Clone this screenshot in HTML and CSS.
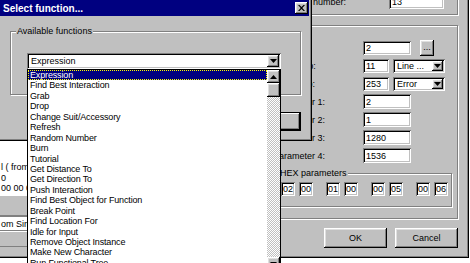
FILE: index.html
```html
<!DOCTYPE html>
<html>
	<head>
		<meta charset="UTF-8">
		<title>Select function...</title>
		<link rel="stylesheet" href="styles.css">
	</head>
	<body>
		<div class="desk">
			<div class="win back">
				<div class="left-col">
					<div class="memo">
						<div>l ( from Sims )</div>
						<div>0</div>
						<div>00 00 00 00</div>
					</div>
					<div class="bar"></div>
					<div class="tab">om Sim</div>
					<div class="bar"></div>
					<div class="bar light"></div>
				</div>
				<div class="grp grp-line">
					<span class="lbl">Line number:</span>
					<span class="field w55">13</span>
				</div>
				<div class="grp grp-main">
					<div class="row">
						<span class="lbl">Function:</span>
						<span class="field w48">2</span>
						<span class="btn dots">...</span>
					</div>
					<div class="row">
						<span class="lbl">True jump:</span>
						<span class="field w26">11</span>
						<span class="combo sm w52"><span class="txt">Line ...</span><span class="arr"><svg width="7" height="4" viewBox="0 0 7 4"><path d="M0 0h7L3.5 4z"/></svg></span></span>
					</div>
					<div class="row">
						<span class="lbl">Else jump:</span>
						<span class="field w26">253</span>
						<span class="combo sm w52"><span class="txt">Error</span><span class="arr"><svg width="7" height="4" viewBox="0 0 7 4"><path d="M0 0h7L3.5 4z"/></svg></span></span>
					</div>
					<div class="row">
						<span class="lbl">Parameter 1:</span>
						<span class="field w48 tall">2</span>
					</div>
					<div class="row">
						<span class="lbl">Parameter 2:</span>
						<span class="field w48 tall">1</span>
					</div>
					<div class="row">
						<span class="lbl">Parameter 3:</span>
						<span class="field w48 tall">1280</span>
					</div>
					<div class="row">
						<span class="lbl">Parameter 4:</span>
						<span class="field w48 tall">1536</span>
					</div>
					<div class="grp grp-hex">
						<span class="legend">HEX parameters</span>
						<div class="pair"><span class="hex">02</span><span class="hex">00</span></div>
						<div class="pair"><span class="hex">01</span><span class="hex">00</span></div>
						<div class="pair"><span class="hex">00</span><span class="hex">05</span></div>
						<div class="pair"><span class="hex">00</span><span class="hex">06</span></div>
					</div>
				</div>
				<div class="btn-row">
					<span class="btn push">OK</span>
					<span class="btn push">Cancel</span>
				</div>
			</div>

			<div class="win front">
				<div class="title">
					<span>Select function...</span>
					<span class="btn close"><svg width="7" height="6" viewBox="0 0 7 6"><path d="M0 0h1.5L3.5 2 5.5 0H7L4.3 3 7 6H5.5L3.5 4 1.5 6H0L2.7 3z"/></svg></span>
				</div>
				<div class="grp grp-avail">
					<span class="legend">Available functions</span>
					<div class="combo big">
						<span class="txt">Expression</span>
						<span class="arr"><svg width="7" height="4" viewBox="0 0 7 4"><path d="M0 0h7L3.5 4z"/></svg></span>
					</div>
				</div>
				<span class="btn push def"></span>
			</div>

			<div class="droplist">
				<div class="items">
					<div class="item sel">Expression</div>
					<div class="item">Find Best Interaction</div>
					<div class="item">Grab</div>
					<div class="item">Drop</div>
					<div class="item">Change Suit/Accessory</div>
					<div class="item">Refresh</div>
					<div class="item">Random Number</div>
					<div class="item">Burn</div>
					<div class="item">Tutorial</div>
					<div class="item">Get Distance To</div>
					<div class="item">Get Direction To</div>
					<div class="item">Push Interaction</div>
					<div class="item">Find Best Object for Function</div>
					<div class="item">Break Point</div>
					<div class="item">Find Location For</div>
					<div class="item">Idle for Input</div>
					<div class="item">Remove Object Instance</div>
					<div class="item">Make New Character</div>
					<div class="item">Run Functional Tree</div>
				</div>
				<div class="scroll">
					<span class="btn sbtn"><svg width="7" height="4" viewBox="0 0 7 4"><path d="M0 4h7L3.5 0z"/></svg></span>
					<span class="btn thumb"></span>
					<span class="track"></span>
					<span class="btn sbtn"><svg width="7" height="4" viewBox="0 0 7 4"><path d="M0 0h7L3.5 4z"/></svg></span>
				</div>
			</div>
		</div>
	</body>
</html>
```

FILE: styles.css
```css
* {
	box-sizing: border-box;
}
body {
	margin: 0;
	background: #fff;
	font: 9px "Liberation Sans", Arial, sans-serif;
	color: #000;
}
.desk {
	position: relative;
	width: 470px;
	height: 263px;
	overflow: hidden;
	background: #fff;
}
.win {
	position: absolute;
	background: #c0c0c0;
}
.btn {
	display: flex;
	align-items: center;
	justify-content: center;
	background: #c0c0c0;
	box-shadow: inset -1px -1px #000, inset 1px 1px #fff, inset -2px -2px #808080, inset 2px 2px #dfdfdf;
}
.field {
	display: flex;
	align-items: center;
	height: 14px;
	padding: 0 3px;
	background: #fff;
	box-shadow: inset 1px 1px #808080, inset -1px -1px #fff, inset 2px 2px #000, inset -2px -2px #c0c0c0;
}
.field.tall {
	height: 15px;
}
.w26 { width: 26px; }
.w48 { width: 48px; }
.w52 { width: 52px; }
.w55 { width: 55px; }
.grp {
	position: relative;
	border: 1px solid #808080;
	box-shadow: inset 1px 1px #fff, 1px 1px #fff;
}
.legend {
	position: absolute;
	top: -6px;
	left: 5px;
	padding: 0 1px;
	background: #c0c0c0;
	line-height: 10px;
}

/* background dialog */
.back {
	left: -4px;
	top: -14px;
	width: 473px;
	height: 272px;
	display: grid;
	grid-template-columns: 266px 1fr;
	grid-template-rows: 29px 204px 1fr;
	box-shadow: inset -1px -1px #000, inset -2px -2px #808080;
}
.left-col {
	grid-row: 1 / 4;
	grid-column: 1;
	padding-top: 144px;
}
.memo {
	height: 65px;
	padding: 32px 0 0 5px;
	background: #fff;
	line-height: 10.5px;
	white-space: nowrap;
}
.bar {
	height: 21px;
	box-shadow: inset 0 1px #fff, inset 0 -1px #808080;
}
.bar.light {
	height: 11px;
	box-shadow: none;
}
.tab {
	height: 15px;
	padding: 2px 0 0 4px;
	background: #fff;
	border: 1px solid #808080;
	line-height: 10px;
}
.tab + .bar {
	height: 16px;
}
.grp-line {
	grid-column: 2;
	margin: 4px 11px 0 14px;
	height: 25px;
	display: flex;
	align-items: flex-end;
	justify-content: flex-end;
	padding: 0 13px 5px 0;
}
.grp-line .lbl {
	margin-right: 43px;
	margin-bottom: 2px;
}
.grp-main {
	grid-column: 2;
	margin: 10px 11px 0 0;
	height: 194px;
	padding: 14px 5px 0 10px;
}
.row {
	display: flex;
	align-items: center;
	height: 15px;
	margin-bottom: 3px;
}
.row .lbl {
	width: 90px;
	flex: none;
}
.dots {
	width: 14px;
	height: 16px;
	margin-left: 9px;
	align-self: flex-start;
	padding-bottom: 3px;
}
.combo {
	display: flex;
	align-items: center;
	background: #fff;
	box-shadow: inset 1px 1px #808080, inset -1px -1px #fff, inset 2px 2px #000, inset -2px -2px #c0c0c0;
	padding: 2px;
}
.combo .txt {
	flex: 1;
	padding-left: 2px;
}
.combo .arr {
	display: flex;
	align-items: center;
	justify-content: center;
	height: 100%;
	background: #c0c0c0;
	box-shadow: inset -1px -1px #000, inset 1px 1px #fff, inset -2px -2px #808080, inset 2px 2px #dfdfdf;
}
.combo.sm {
	height: 14px;
	margin-left: 4px;
}
.combo.sm .arr {
	width: 11px;
}
.grp-hex {
	display: flex;
	gap: 13px;
	height: 34px;
	margin: 10px 0 0 2px;
	padding: 8px 0 0 5px;
}
.grp-hex .legend {
	left: 3px;
}
.pair {
	display: flex;
	gap: 4px;
}
.hex {
	width: 14px;
	height: 14px;
	padding: 1px 0 0 2px;
	background: #fff;
	box-shadow: inset 1px 1px #808080, inset -1px -1px #fff, inset 2px 2px #000, inset -2px -2px #c0c0c0;
	line-height: 12px;
}
.btn-row {
	grid-column: 2;
	display: flex;
	justify-content: flex-end;
	align-items: flex-start;
	gap: 8px;
	margin: 9px 11px 0 0;
}
.push {
	width: 63px;
	height: 20px;
}

/* Select function dialog */
.front {
	left: -3px;
	top: -3px;
	width: 315px;
	height: 144px;
	padding: 3px;
	box-shadow: inset 1px 1px #dfdfdf, inset -1px -1px #000, inset 2px 2px #fff, inset -2px -2px #808080;
}
.title {
	display: flex;
	align-items: center;
	justify-content: space-between;
	height: 16px;
	padding: 0 1px 0 3px;
	background: #000080;
	color: #fff;
	font-weight: bold;
	font-size: 10px;
}
.close {
	width: 13px;
	height: 12px;
}
.grp-avail {
	margin: 15px 0 0 10px;
	width: 291px;
	height: 64px;
	padding: 21px 0 0 16px;
}
.combo.big {
	width: 254px;
	height: 16px;
}
.combo.big .arr {
	width: 12px;
}
.def {
	margin: 17px 0 0 225px;
	width: 76px;
	height: 19px;
	box-shadow: inset 0 0 0 1px #000, inset -2px -2px #000, inset 2px 2px #fff, inset -3px -3px #808080;
}

/* dropped list */
.droplist {
	position: absolute;
	left: 27px;
	top: 69px;
	width: 254px;
	height: 202px;
	display: flex;
	border: 1px solid #000;
	background: #fff;
}
.items {
	flex: 1;
}
.item {
	height: 10.45px;
	line-height: 10.45px;
	padding-left: 2px;
	letter-spacing: -0.15px;
	white-space: nowrap;
}
.item.sel {
	background: #000080;
	color: #fff;
	outline: 1px dotted #ffff00;
	outline-offset: -1px;
}
.scroll {
	width: 13px;
	display: flex;
	flex-direction: column;
}
.sbtn, .thumb {
	height: 13px;
	flex: none;
}
.thumb {
	height: 14px;
}
.track {
	flex: 1;
	background: repeating-conic-gradient(#c0c0c0 0 25%, #fff 0 50%) 0 0 / 2px 2px;
}
```
